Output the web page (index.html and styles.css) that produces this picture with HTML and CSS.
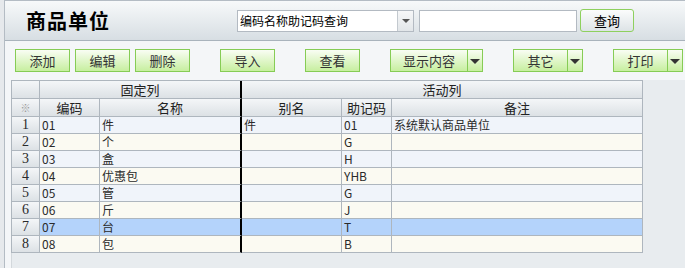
FILE: index.html
```html
<!DOCTYPE html>
<html lang="zh-CN">
<head>
    <meta charset="UTF-8">
    <title>商品单位</title>
    <link rel="stylesheet" href="styles.css">
</head>
<body>
    <div class="page">
        <div class="header">
            <h1 class="title">商品单位</h1>
            <div class="select">
                <span class="select-text">编码名称助记码查询</span>
                <span class="select-arrow"><i class="tri-small"></i></span>
            </div>
            <input type="text" class="search-input">
            <button class="query-btn">查询</button>
        </div>

        <div class="toolbar">
            <div class="group">
                <button class="btn">添加</button>
                <button class="btn">编辑</button>
                <button class="btn">删除</button>
            </div>
            <button class="btn">导入</button>
            <button class="btn">查看</button>
            <div class="split wide">
                <span class="split-main">显示内容</span>
                <span class="split-arrow"><i class="tri"></i></span>
            </div>
            <div class="split">
                <span class="split-main">其它</span>
                <span class="split-arrow"><i class="tri"></i></span>
            </div>
            <div class="split">
                <span class="split-main">打印</span>
                <span class="split-arrow"><i class="tri"></i></span>
            </div>
        </div>

        <div class="grid-area">
            <table class="grid">
                <colgroup>
                    <col class="c-no">
                    <col class="c-code">
                    <col class="c-name">
                    <col class="c-alias">
                    <col class="c-mnem">
                    <col class="c-note">
                </colgroup>
                <thead>
                    <tr>
                        <th class="rownum"></th>
                        <th colspan="2" class="fixed-end">固定列</th>
                        <th colspan="3">活动列</th>
                    </tr>
                    <tr>
                        <th class="rownum star">※</th>
                        <th>编码</th>
                        <th class="fixed-end">名称</th>
                        <th>别名</th>
                        <th>助记码</th>
                        <th>备注</th>
                    </tr>
                </thead>
                <tbody>
                    <tr class="odd">
                        <td class="rownum">1</td><td>01</td><td class="fixed-end">件</td><td>件</td><td>01</td><td>系统默认商品单位</td>
                    </tr>
                    <tr class="even">
                        <td class="rownum">2</td><td>02</td><td class="fixed-end">个</td><td></td><td>G</td><td></td>
                    </tr>
                    <tr class="odd">
                        <td class="rownum">3</td><td>03</td><td class="fixed-end">盒</td><td></td><td>H</td><td></td>
                    </tr>
                    <tr class="even">
                        <td class="rownum">4</td><td>04</td><td class="fixed-end">优惠包</td><td></td><td>YHB</td><td></td>
                    </tr>
                    <tr class="odd">
                        <td class="rownum">5</td><td>05</td><td class="fixed-end">管</td><td></td><td>G</td><td></td>
                    </tr>
                    <tr class="even">
                        <td class="rownum">6</td><td>06</td><td class="fixed-end">斤</td><td></td><td>J</td><td></td>
                    </tr>
                    <tr class="selected">
                        <td class="rownum">7</td><td>07</td><td class="fixed-end">台</td><td></td><td>T</td><td></td>
                    </tr>
                    <tr class="even">
                        <td class="rownum">8</td><td>08</td><td class="fixed-end">包</td><td></td><td>B</td><td></td>
                    </tr>
                </tbody>
            </table>
        </div>
    </div>
</body>
</html>
```

FILE: styles.css
```css
html, body {
    margin: 0;
    height: 100%;
}
body {
    background: #e6e9ec;
    font-family: "Noto Sans CJK SC", "DejaVu Sans", sans-serif;
    font-size: 12px;
    color: #222;
    overflow: hidden;
}
.page {
    margin-left: 4px;
    height: 100%;
    background: #f4f6f8;
    border-left: 1px solid #b4bcc4;
    border-top: 1px solid #b4bcc4;
    box-sizing: border-box;
    display: flex;
    flex-direction: column;
}

/* header */
.header {
    height: 39px;
    display: flex;
    align-items: center;
    background: linear-gradient(#f7f9fa, #d7dee3);
    border-bottom: 1px solid #a9b3bc;
}
.title {
    margin: 0;
    width: 232px;
    padding-left: 21px;
    box-sizing: border-box;
    font-size: 20px;
    font-weight: bold;
    letter-spacing: 1px;
    color: #000;
    line-height: 22px;
}
.select {
    width: 177px;
    height: 22px;
    box-sizing: border-box;
    border: 1px solid #b3bac2;
    background: #fff;
    display: flex;
}
.select-text {
    flex: 1;
    padding-left: 2px;
    line-height: 20px;
    color: #000;
}
.select-arrow {
    width: 15px;
    border-left: 1px solid #c3c9cf;
    background: linear-gradient(#f6f7f8, #e2e6e9);
    display: flex;
    align-items: center;
    justify-content: center;
}
.tri-small {
    width: 0;
    height: 0;
    border-left: 4px solid transparent;
    border-right: 4px solid transparent;
    border-top: 4px solid #555;
}
.search-input {
    margin-left: 5px;
    width: 158px;
    height: 22px;
    box-sizing: border-box;
    border: 1px solid #b3bac2;
    background: #fff;
    padding: 0;
}
.query-btn {
    margin-left: 3px;
    width: 54px;
    height: 23px;
    border: 1px solid #8ed05e;
    border-radius: 3px;
    background: linear-gradient(#fbfcfc, #dde3e6);
    font-family: inherit;
    font-size: 13px;
    color: #000;
    padding: 0;
    margin-top: -1px;
}

/* toolbar */
.toolbar {
    display: flex;
    gap: 30px;
    padding: 8px 0 8px 10px;
}
.group {
    display: flex;
    gap: 5px;
}
.btn, .split {
    width: 55px;
    height: 23px;
    box-sizing: border-box;
    border: 1px solid #86cc55;
    background: linear-gradient(#f9fdf4, #c7ef9f);
    font-family: inherit;
    font-size: 13px;
    color: #333;
    padding: 0;
}
.split {
    width: 70px;
    display: flex;
}
.split.wide {
    width: 93px;
}
.split-main {
    flex: 1;
    text-align: center;
    line-height: 21px;
    border-right: 1px solid #86cc55;
}
.split-arrow {
    width: 14px;
    display: flex;
    align-items: center;
    justify-content: center;
}
.tri {
    width: 0;
    height: 0;
    border-left: 5px solid transparent;
    border-right: 5px solid transparent;
    border-top: 5px solid #333;
    margin-top: 1px;
}

/* grid */
.grid-area {
    flex: 1;
    margin-left: 6px;
    background: #e8ecef;
    border-left: 1px solid #d3d8dc;
}
.grid {
    margin-left: -1px;
    border-collapse: separate;
    border-spacing: 0;
    table-layout: fixed;
    width: 631px;
    border-top: 1px solid #aeb6be;
    border-left: 1px solid #aeb6be;
}
.c-no { width: 28px; }
.c-code { width: 60px; }
.c-name { width: 142px; }
.c-alias { width: 100px; }
.c-mnem { width: 50px; }
.c-note { width: 251px; }
.grid th, .grid td {
    border-right: 1px solid #aeb6be;
    border-bottom: 1px solid #aeb6be;
    padding: 0 0 0 2px;
    white-space: nowrap;
    overflow: hidden;
}
.grid th {
    height: 17px;
    line-height: 17px;
    font-weight: normal;
    font-size: 13px;
    color: #222;
    background: linear-gradient(#f4f6f8, #dce1e5);
    text-align: center;
    padding: 0;
}
.grid td {
    height: 16px;
    line-height: 16px;
    color: #2a2a2a;
}
.grid .fixed-end {
    border-right: 2px solid #000;
}
.grid td.rownum {
    background: linear-gradient(#f4f6f8, #dce1e5);
    text-align: center;
    padding: 0;
    font-family: "Liberation Serif", serif;
    font-size: 14px;
}
.grid th.star {
    color: #999;
    font-size: 10px;
}
.odd td { background: #f0f4fa; }
.even td { background: #fbfaf2; }
.selected td { background: #b4d3fb; }
```
